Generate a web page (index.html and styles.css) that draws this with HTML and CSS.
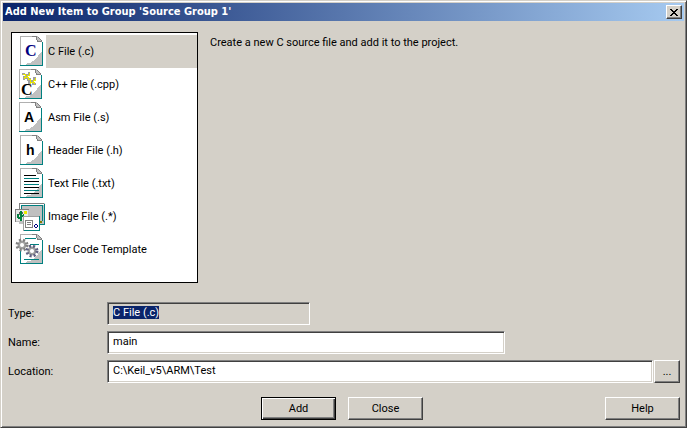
FILE: index.html
```html
<!DOCTYPE html>
<html lang="en">
<head>
    <meta charset="UTF-8">
    <meta name="viewport" content="width=device-width, initial-scale=1.0">
    <title>Add New Item to Group</title>
    <link rel="stylesheet" href="styles.css">
</head>
<body>
    <div class="dialog">
        <header class="title-bar">
            <h1>Add New Item to Group 'Source Group 1'</h1>
            <button type="button" class="close-box" aria-label="Close window">
                <svg width="8" height="7" viewBox="0 0 8 7" shape-rendering="crispEdges">
                    <path d="M0 0h2v1h1v1h2V1h1V0h2v1H7v1H6v1H5v1h1v1h1v1h1v1H6V6H5V5H3v1H2v1H0V6h1V5h1V4h1V3H2V2H1V1H0z"/>
                </svg>
            </button>
        </header>

        <!-- shared page shape for the file icons -->
        <svg class="defs" width="0" height="0">
            <symbol id="page" viewBox="0 0 32 32">
                <path d="M6 1h17l5 5v25H6z" fill="#fff"/>
                <path d="M28 16v14H11l2-2h3l2-2h2l2-3 2-2 1-2 2-1z" fill="#c0c0c0"/>
                <path d="M6.500 30V1.500H23" fill="none" stroke="#b0b0b0"/>
                <path d="M22 1h2v1h1v1h1v1h1v1h1v2h-4V6h-1V4h-1z" fill="#c0c0c0"/>
                <path d="M18 1.500h5M22.500 2v3M23.500 5v2M24 6.500h4M24 2.500h1M25 3.500h1M26 4.500h1M27 5.500h1" fill="none" stroke="#808080"/>
                <path d="M28.500 7v23.500H6" fill="none" stroke="#008080"/>
            </symbol>
        </svg>

        <main class="top">
            <ul class="item-list" role="listbox" aria-label="Item type">
                <li class="item selected" role="option" aria-selected="true">
                    <svg class="icon" viewBox="0 0 32 32">
                        <use href="#page" shape-rendering="crispEdges"/>
                        <text class="serif navy" x="11" y="21">C</text>
                    </svg>
                    <span>C File (.c)</span>
                </li>
                <li class="item" role="option">
                    <svg class="icon" viewBox="0 0 32 32">
                        <use href="#page" x="-1" shape-rendering="crispEdges"/>
                        <path d="M8 5h3v1h3V4h2v4h-2v2h2v3h-3v-2h-2v1H9V8h2V7H8zM14 10h3v2h2V9h3v4h-3v2h3v2h-4v-2h-2v2h-2v-4h2v-1h-2z" fill="#a0a0a0" shape-rendering="crispEdges"/>
                        <path d="M9 6h2v3h3v3M15 5v2h-2v2h-3v2M14 11h2v3h4v2M21 10v2h-2v2h-3v2" fill="none" stroke="#e8e800" shape-rendering="crispEdges"/>
                        <text class="serif" x="7" y="27">C</text>
                    </svg>
                    <span>C++ File (.cpp)</span>
                </li>
                <li class="item" role="option">
                    <svg class="icon" viewBox="0 0 32 32">
                        <use href="#page" x="-1" shape-rendering="crispEdges"/>
                        <text class="sans" x="10" y="21">A</text>
                    </svg>
                    <span>Asm File (.s)</span>
                </li>
                <li class="item" role="option">
                    <svg class="icon" viewBox="0 0 32 32">
                        <use href="#page" shape-rendering="crispEdges"/>
                        <text class="sans" x="12" y="21">h</text>
                    </svg>
                    <span>Header File (.h)</span>
                </li>
                <li class="item" role="option">
                    <svg class="icon" viewBox="0 0 32 32" shape-rendering="crispEdges">
                        <use href="#page"/>
                        <path d="M10 8.500h12M10 14.500h15M10 20.500h15M10 26.500h15" stroke="#000"/>
                        <path d="M10 11.500h15M10 17.500h15M10 23.500h15" stroke="#008080"/>
                    </svg>
                    <span>Text File (.txt)</span>
                </li>
                <li class="item" role="option">
                    <svg class="icon" viewBox="0 0 32 32" shape-rendering="crispEdges">
                        <path d="M5 3h26v21H5z" fill="#c0c0c0"/>
                        <path d="M6 4h24v1H7v4H6z" fill="#fff"/>
                        <path d="M5.500 9V3.500H30" fill="none" stroke="#808080"/>
                        <path d="M7.500 9V5.500H28M28.500 5v16M30.500 4v20H26" fill="none" stroke="#008080"/>
                        <path d="M26 21h2v2h-2z" fill="#808000"/>
                        <path d="M1 9h14v13H1z" fill="#e8e8e8"/>
                        <path d="M1.500 22V9.500H15" fill="none" stroke="#808080"/>
                        <path d="M14.500 10v11.500H2" fill="none" stroke="#c0c0c0"/>
                        <path d="M6 11h2v10H6zM3 14h2v3h1v2H4v-1H3zM9 14h1v3H8v-2h1z" fill="#008040"/>
                        <path d="M5 12h1v3H5zM8 12h1v2H8z" fill="#606060"/>
                        <path d="M10 11h3v3h-3z" fill="#e8e800"/>
                        <path d="M9 16h17v15H9z" fill="#fff"/>
                        <path d="M9.500 31V16.500H26" fill="none" stroke="#a0a0a0"/>
                        <path d="M25.500 16v14.500H10" fill="none" stroke="#008080"/>
                        <path d="M11.500 20.500h7v7h-7zM13 22.500h4M13 24.500h4" fill="none" stroke="#808080"/>
                        <path d="M21 24.500h2M21 27.500h2M20.500 25v2M23.500 25v2" fill="none" stroke="#000080"/>
                    </svg>
                    <span>Image File (.*)</span>
                </li>
                <li class="item" role="option">
                    <svg class="icon" viewBox="0 0 32 32">
                        <use href="#page" shape-rendering="crispEdges"/>
                        <path d="M11 5.500h11M10 26.500h15M16 11.500h9" stroke="#008080"/>
                        <path d="M6.500 18v12" stroke="#008080"/>
                        <g fill="none" stroke="#a0a0a0">
                            <circle cx="8" cy="12" r="3" stroke-width="3"/>
                            <circle cx="8" cy="12" r="5" stroke="#808080" stroke-width="3" stroke-dasharray="2 2"/>
                            <circle cx="18" cy="18" r="3" stroke-width="3"/>
                            <circle cx="18" cy="18" r="5" stroke="#606080" stroke-width="3" stroke-dasharray="2 2"/>
                        </g>
                        <circle cx="8" cy="12" r="2" fill="#fff"/>
                        <circle cx="18" cy="18" r="2" fill="#fff"/>
                    </svg>
                    <span>User Code Template</span>
                </li>
            </ul>
            <p class="description">Create a new C source file and add it to the project.</p>
        </main>

        <form>
            <div class="fields">
                <label for="type">Type:</label>
                <input id="type" class="type" type="text" value="C File (.c)" readonly>
                <label for="name">Name:</label>
                <input id="name" class="name" type="text" value="main">
                <label for="location">Location:</label>
                <div class="location">
                    <input id="location" type="text" value="C:\Keil_v5\ARM\Test">
                    <button type="button" class="browse">...</button>
                </div>
            </div>
            <div class="buttons">
                <div class="center">
                    <button type="submit" class="default">Add</button>
                    <button type="button">Close</button>
                </div>
                <button type="button" class="help">Help</button>
            </div>
        </form>
    </div>

    <script>
        const typeField = document.getElementById('type');
        typeField.focus();
        typeField.select();
    </script>
</body>
</html>
```
FILE: styles.css
```css
* {
    box-sizing: border-box;
}
body {
    margin: 0;
    background-color: #d4d0c8;
    color: #000;
    font-family: Roboto, sans-serif;
    font-size: 11px;
    line-height: 14px;
}
.dialog {
    display: flex;
    flex-direction: column;
    min-height: 100vh;
    padding: 1px;
    border: 1px solid #d4d0c8;
    border-right-color: #404040;
    border-bottom-color: #404040;
    box-shadow: inset 1px 1px #fff, inset -1px -1px #808080;
}
.title-bar {
    display: flex;
    align-items: center;
    justify-content: space-between;
    height: 18px;
    margin: 1px 1px 0;
    padding: 0 2px;
    background: linear-gradient(to right, #0a246a, #a6caf0);
    color: #fff;
}
.title-bar h1 {
    margin: 0;
    font-family: "DejaVu Sans Condensed", sans-serif;
    font-size: 11px;
}
button {
    height: 23px;
    padding: 0;
    border: 1px solid #fff;
    border-right-color: #404040;
    border-bottom-color: #404040;
    box-shadow: inset -1px -1px #808080;
    background-color: #d4d0c8;
    color: #000;
    font: inherit;
}
.close-box {
    display: flex;
    align-items: center;
    justify-content: center;
    width: 16px;
    height: 14px;
}
.defs {
    position: absolute;
}
.top {
    display: flex;
    gap: 12px;
    padding: 11px 9px 0;
}
.item-list {
    width: 187px;
    min-height: 251px;
    margin: 0;
    padding: 2px 0 0 2px;
    border: 1px solid #000;
    background-color: #fff;
    list-style: none;
}
.item {
    display: flex;
    height: 33px;
}
.item span {
    flex: 1;
    padding: 1px 0 0 2px;
    line-height: 32px;
}
.item.selected span {
    background-color: #d4d0c8;
}
.icon {
    width: 32px;
    height: 32px;
}
.serif {
    font: bold 16px "Liberation Serif", serif;
}
.navy {
    fill: #000080;
}
.sans {
    font: bold 14px "Liberation Sans", sans-serif;
}
.description {
    flex: 1;
    margin: 4px 0 0;
}
.fields {
    display: grid;
    grid-template-columns: 99px 1fr;
    row-gap: 6px;
    align-items: center;
    padding: 19px 5px 0 6px;
}
input {
    width: 100%;
    height: 23px;
    padding: 0 5px 3px;
    border: 1px solid #808080;
    border-right-color: #fff;
    border-bottom-color: #fff;
    box-shadow: inset 1px 1px #404040, inset -1px -1px #d4d0c8;
    background-color: #fff;
    color: #000;
    font: inherit;
    outline: none;
}
input::selection {
    background-color: #0a246a;
    color: #fff;
}
.type {
    max-width: 203px;
    background-color: #d4d0c8;
}
.name {
    max-width: 398px;
}
.location {
    display: flex;
    gap: 1px;
}
.browse {
    flex: none;
    width: 26px;
}
.buttons {
    display: grid;
    grid-template-columns: 1fr auto 1fr;
    padding: 14px 5px 6px 2px;
}
.buttons button {
    width: 75px;
}
.center {
    display: flex;
    grid-column: 2;
    gap: 12px;
}
.default {
    border-color: #000;
    box-shadow: inset 1px 1px #fff, inset -1px -1px #404040, inset -2px -2px #808080;
}
.help {
    justify-self: end;
}
```
